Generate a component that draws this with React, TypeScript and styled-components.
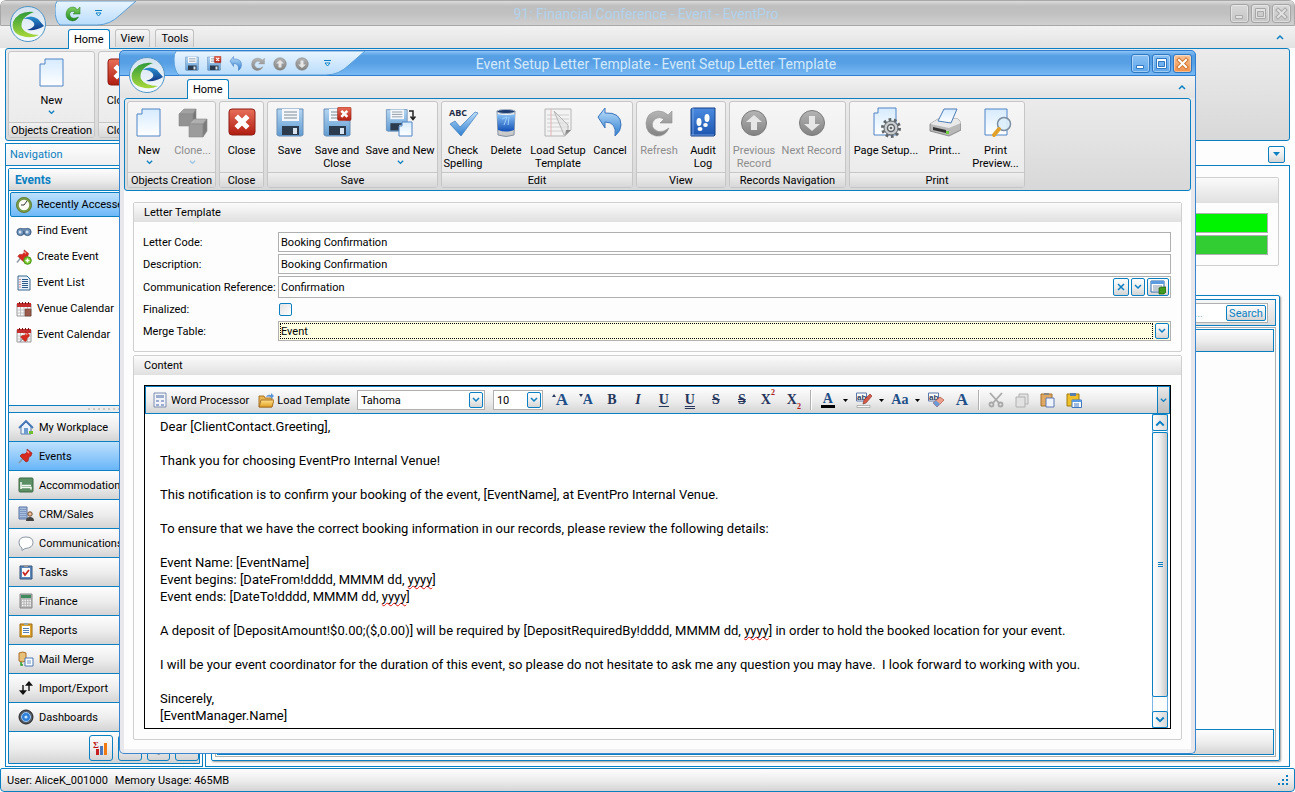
import React from "react";
import styled, { createGlobalStyle, css } from "styled-components";

const BLUE = "#0a7fc2";
const FACE = "linear-gradient(#fdfdfd, #ececec 55%, #d4d4d4)";

const GlobalStyle = createGlobalStyle`
  *, *::before, *::after { box-sizing: border-box; }
  body { margin: 0; background: #fff; color: #000; font: 11px/13px Roboto, "DejaVu Sans Condensed", sans-serif; }
  button, input, select { font: inherit; color: inherit; margin: 0; padding: 0; border: 0; background: none; }
  button { white-space: nowrap; text-align: left; }
  svg { display: block; flex: none; }
`;

/* ---------- icons ---------- */

function Gradient({ id, from, to }: { id: string; from: string; to: string }) {
  return (
    <linearGradient id={id} x1="0" y1="0" x2="0" y2="1">
      <stop offset="0" stopColor={from} />
      <stop offset="1" stopColor={to} />
    </linearGradient>
  );
}

const DefsSvg = styled.svg`
  position: absolute;
  width: 0;
  height: 0;
`;

function Defs() {
  return (
    <DefsSvg aria-hidden>
      <defs>
        <Gradient id="gPage" from="#d6ebff" to="#ffffff" />
        <Gradient id="gRed" from="#e8705a" to="#b01c10" />
        <Gradient id="gDisk" from="#b5d6f2" to="#5f9bd2" />
        <Gradient id="gBlue" from="#bfe0fb" to="#2f7fd0" />
        <Gradient id="gGray" from="#b5b5b5" to="#828282" />
        <Gradient id="gBook" from="#4a8be0" to="#1d55ae" />
        <Gradient id="gBin" from="#8cc4f5" to="#1050b8" />
        <Gradient id="gSilver" from="#fafafa" to="#c4c4c4" />
        <Gradient id="gGreen" from="#7fd060" to="#1f8a1f" />
        <Gradient id="gGold" from="#ffe08a" to="#e0a020" />
        <Gradient id="gOrb" from="#d4e2ee" to="#f6fbff" />
        <Gradient id="gLeaf" from="#2f9a3a" to="#a8d83a" />
        <Gradient id="gSwirl" from="#2a90d0" to="#123a88" />
        <Gradient id="gQat" from="#e9f5ff" to="#b9dcfb" />
      </defs>
    </DefsSvg>
  );
}

const disk = (
  <g>
    <path d="M3 2h26v26l-2 1H5l-2-1z" fill="url(#gDisk)" stroke="#6a8fb5" />
    <path d="M8 2h17v12H8z" fill="#f4f8fc" />
    <path d="M10 5h13M10 8h13M10 11h13" stroke="#7c8894" />
    <path d="M8 19h17v9H8z" fill="#2b3a4c" />
    <path d="M19 21h4v6h-4z" fill="#d7e3ee" />
  </g>
);

const redX = (
  <g>
    <rect x="3" y="2" width="26" height="26" rx="3" fill="url(#gRed)" stroke="#8e1c12" />
    <path d="M12 11l8 8M20 11L12 19" stroke="#fff" strokeWidth="5" strokeLinecap="square" />
  </g>
);

const pageShape = (
  <path d="M9 2h18v27H4V7h5z" fill="url(#gPage)" stroke="#4f84c4" />
);

const pin = (
  <g>
    <path d="M1 15l5-6" stroke="#8a94a0" strokeWidth="1.5" />
    <path d="M9 1l5 4-1 3-2 1-1 4-2 1-6-6 2-2 3 0 2-2z" fill="#d8291f" stroke="#98180f" strokeWidth=".6" />
    <path d="M9 3l2 2" stroke="#ff9a90" strokeWidth="1.5" />
  </g>
);

const calendar = (
  <g>
    <path d="M1 3h14v12H1z" fill="#f6f6f6" stroke="#9a9a9a" />
    <path d="M1 2h14v4H1z" fill="#c32d2d" />
    <path d="M3.500 1v2M6.500 1v2M9.500 1v2M12.500 1v2" stroke="#701818" />
    <path d="M1 9h14M1 12h14M4.500 6v9M8 6v9M11.500 6v9" stroke="#b5b5b5" strokeWidth=".7" />
  </g>
);

const big: Record<string, React.ReactNode> = {
  new: pageShape,
  close: redX,
  clone: (
    <g stroke="#8c8c8c" strokeWidth=".6">
      <path d="M2 7l5-5h12l-3 5z" fill="#a2a2a2" />
      <path d="M2 7h14v12H2z" fill="#929292" />
      <path d="M16 7l3-5v12l-3 5z" fill="#757575" />
      <path d="M12 17l5-5h13l-4 5z" fill="#b0b0b0" />
      <path d="M12 17h14v13H12z" fill="#9c9c9c" />
      <path d="M26 17l4-5v12l-4 6z" fill="#7c7c7c" />
    </g>
  ),
  save: disk,
  saveClose: (
    <g>
      {disk}
      <g transform="translate(15 -1) scale(.52)">{redX}</g>
    </g>
  ),
  saveNew: (
    <g>
      <g transform="translate(0 1) scale(.8)">{disk}</g>
      <path d="M18 15h10v14H15V19h3z" fill="url(#gPage)" stroke="#4f84c4" />
      <path d="M25 4h4v8M26.500 9.500l2.500 3 2.500-3" fill="none" stroke="#222" strokeWidth="1.500" />
    </g>
  ),
  spelling: (
    <g>
      <text x="2" y="9" fontSize="9" fontWeight="bold" fill="#1d2b45" fontFamily="Open Sans, sans-serif">ABC</text>
      <path d="M3 17l5-3 5 6L28 5l3 1-17 23z" fill="url(#gBlue)" stroke="#3c78b8" strokeWidth=".7" />
    </g>
  ),
  delete: (
    <g>
      <path d="M7 4h18l-1 24q-8 3-16 0z" fill="url(#gSilver)" stroke="#8894a4" />
      <path d="M7 7q9 2 18 0l-1 16q-8 3-16 0z" fill="url(#gBin)" />
      <ellipse cx="16" cy="4.500" rx="9" ry="2" fill="#1d3c70" stroke="#a5b4c6" />
      <path d="M12 12l5-2-3 8M19 10l-1 8" stroke="#9cd0ff" fill="none" />
    </g>
  ),
  loadTemplate: (
    <g>
      <path d="M3 2h26v21l-6 6H3z" fill="#f3f3f3" stroke="#b5b5b5" />
      <path d="M5 8h22M5 12h22M5 16h22M5 20h22M5 24h18" stroke="#cfcfcf" />
      <path d="M9 2v27" stroke="#e0b5b5" />
      <path d="M12 4l14 14v5l-4 5z" fill="#e2e2e2" fillOpacity=".7" stroke="#b5b5b5" />
      <path d="M29 23h-5q0 4-2 6z" fill="#8a8a8a" />
    </g>
  ),
  cancel: (
    <path d="M3 11L10 2v5q16-1 16 12 0 6-6 11 2-14-10-14v6z" transform="translate(1 -1)" fill="url(#gBlue)" stroke="#3a74bd" />
  ),
  refresh: (
    <path d="M25 8l4-4v12H17l4-4q-5-3-9 0-5 5-1 10 4 4 10 2l5-3q-4 9-13 8Q3 27 3 16 4 5 15 4q6 0 10 4z" fill="url(#gGray)" stroke="#8f8f8f" strokeWidth=".6" />
  ),
  audit: (
    <g>
      <path d="M4 2l2-1h22v27l-1 1H4z" fill="url(#gBook)" stroke="#153f86" />
      <path d="M4 28h23M6 1v27" stroke="#8fb8ee" strokeWidth=".7" />
      <g fill="#fff">
        <ellipse cx="12" cy="15" rx="2.500" ry="4" />
        <ellipse cx="13" cy="22" rx="2.500" ry="2" />
        <ellipse cx="20" cy="11" rx="2.500" ry="4" />
        <ellipse cx="18.500" cy="18" rx="2.300" ry="2" />
      </g>
    </g>
  ),
  up: (
    <g>
      <circle cx="16" cy="16" r="12.500" fill="url(#gGray)" stroke="#7a7a7a" />
      <path d="M16 8l8 7h-5v8h-6v-8H8z" fill="#e6e6e6" />
    </g>
  ),
  down: (
    <g>
      <circle cx="16" cy="16" r="12.500" fill="url(#gGray)" stroke="#7a7a7a" />
      <path d="M16 24l-8-7h5V9h6v8h5z" fill="#e6e6e6" />
    </g>
  ),
  pageSetup: (
    <g>
      <path d="M8 1h18v27H4V6h4z" fill="url(#gPage)" stroke="#4f84c4" />
      <circle cx="21" cy="21" r="8.500" fill="none" stroke="#5f6468" strokeWidth="3" strokeDasharray="2.700 2.640" />
      <circle cx="21" cy="21" r="7" fill="#c9cdd0" stroke="#5f6468" />
      <circle cx="21" cy="21" r="3.500" fill="#eee" stroke="#5f6468" strokeWidth="1.500" />
      <circle cx="21" cy="21" r="1.300" fill="#5f6468" />
    </g>
  ),
  print: (
    <g>
      <path d="M1 17l8-5h20l3 4v7l-12 6L1 24z" fill="#b8b8b8" stroke="#6e6e6e" strokeWidth=".7" />
      <path d="M1 17l8-5h20l3 4-12 5z" fill="#e9e9e9" />
      <path d="M9 14L15 2h13l-6 14z" fill="url(#gPage)" stroke="#4c7db8" />
      <path d="M4 20l13 3v3L4 23z" fill="#333" />
      <path d="M17 24h3v3h-3z" fill="#6ccf3c" />
    </g>
  ),
  preview: (
    <g>
      <path d="M5 2h22v26H5z" fill="url(#gPage)" stroke="#4f84c4" />
      <circle cx="24" cy="17" r="6.500" fill="#dceefa" fillOpacity=".9" stroke="#7b8da0" strokeWidth="1.500" />
      <path d="M19 22l-5 6" stroke="#e0a02a" strokeWidth="4" strokeLinecap="round" />
    </g>
  ),
};

const small: Record<string, React.ReactNode> = {
  pin,
  recent: (
    <g>
      <circle cx="8" cy="8" r="6.500" fill="#fdfdf6" stroke="#7a9a4a" strokeWidth="2.500" />
      <circle cx="8" cy="8" r="7.600" fill="none" stroke="#4c6a1c" strokeWidth=".6" />
      <path d="M8 8l3-4M8 8H5" stroke="#333" fill="none" />
    </g>
  ),
  find: (
    <g>
      <circle cx="4.500" cy="9" r="3.600" fill="#6f93b8" stroke="#3d5a80" />
      <circle cx="11.500" cy="9" r="3.600" fill="#6f93b8" stroke="#3d5a80" />
      <path d="M6 5h4v3H6z" fill="#6a86a8" />
      <circle cx="4" cy="9" r="1.500" fill="#cfe0f0" />
      <circle cx="11" cy="9" r="1.500" fill="#cfe0f0" />
    </g>
  ),
  create: (
    <g>
      <g transform="scale(.9)">{pin}</g>
      <circle cx="11.500" cy="11.500" r="3.800" fill="#74c52c" stroke="#4c951a" />
      <path d="M11.500 9.500v4M9.500 11.500h4" stroke="#fff" strokeWidth="1.500" />
    </g>
  ),
  list: (
    <g>
      <path d="M2 1h9l3 3v11H2z" fill="#e8f2fb" stroke="#39698f" />
      <path d="M6 4.500h6M6 6.500h6M6 8.500h6M6 10.500h6M6 12.500h6" stroke="#2c5a88" />
      <path d="M3.500 4.500h1M3.500 7h1M3.500 9.500h1M3.500 12h1" stroke="#c22" />
    </g>
  ),
  venueCal: (
    <g>
      {calendar}
      <path d="M9 8h6v7H9z" fill="#9a5a4a" stroke="#6a3a30" strokeWidth=".6" />
    </g>
  ),
  eventCal: (
    <g>
      {calendar}
      <g transform="translate(3 4) scale(.75)">{pin}</g>
    </g>
  ),
  home: (
    <g>
      <path d="M3 8v7h10V8L8 3z" fill="#eaf2fb" stroke="#5a7ca8" />
      <path d="M1 9l7-7 7 7" fill="none" stroke="#4678b8" strokeWidth="1.800" />
      <path d="M6 9h4v6H6z" fill="#6f9cd0" />
      <path d="M11 12h4v3h-4z" fill="#6ec02e" />
    </g>
  ),
  bed: (
    <g>
      <rect x="1" y="1" width="14" height="14" rx="1" fill="#5c8f64" stroke="#3d6b45" />
      <path d="M3 5v7M3 10.500h10v2M4 8.500h9" stroke="#f2faf2" strokeWidth="1.500" fill="none" />
    </g>
  ),
  crm: (
    <g>
      <path d="M1 1h8v12H1z" fill="#a9bfe0" stroke="#52719f" />
      <path d="M3 3v9M5 3v9M7 3v9" stroke="#52719f" strokeDasharray="1 1" />
      <circle cx="12" cy="8" r="2.200" fill="#f0c098" stroke="#6a4a30" />
      <path d="M8 15q0-4 4-4t4 4z" fill="#444" />
    </g>
  ),
  speech: (
    <path d="M4 13l0 2.500 3-2Q15 13 15 7.500 15 2 8 2 1 2 1 7.500q0 4 3 5.500z" fill="#fff" stroke="#8b97a5" />
  ),
  tasks: (
    <g>
      <path d="M2 2h12v13H2z" fill="#5c87ba" stroke="#33557f" />
      <path d="M4 4h8v9H4z" fill="#fff" />
      <path d="M6 1h4v2H6z" fill="#999" />
      <path d="M5 8l2 3 4-5" fill="none" stroke="#c82222" strokeWidth="1.700" />
    </g>
  ),
  calc: (
    <g>
      <path d="M2 1h12v14H2z" fill="#b5b5b5" stroke="#888" />
      <path d="M3 2h10v3H3z" fill="#3f8a5c" />
      <path d="M4 7.500h9M4 10h9M4 12.500h9" stroke="#f5f5f5" strokeWidth="1.500" strokeDasharray="1.500 1" />
    </g>
  ),
  reports: (
    <g>
      <path d="M2 2h12v13H2z" fill="#e0a52e" stroke="#9a6a10" />
      <path d="M4 4h8v9H4z" fill="#fff" />
      <path d="M6 1h4v2H6z" fill="#9aa" />
      <path d="M5 6.500h6M5 8.500h6M5 10.500h6" stroke="#5580b5" />
    </g>
  ),
  merge: (
    <g>
      <path d="M1 2q4-2 7 0v8q-4 2-7 0z" fill="#e9c078" stroke="#a8702a" />
      <path d="M7 7h8v8H7z" fill="#fff" stroke="#4877b5" />
      <path d="M9 10h4M9 12h4" stroke="#6f93c5" />
      <path d="M3 11v3h2" stroke="#2d9a2d" fill="none" strokeWidth="1.500" />
    </g>
  ),
  transfer: (
    <path d="M5 5v8M2.500 11L5 14l2.500-3zM11 3v8M8.500 5L11 2l2.500 3z" fill="#111" stroke="#111" strokeWidth="1.400" />
  ),
  gauge: (
    <g>
      <circle cx="8" cy="8" r="7" fill="#555c66" stroke="#222" />
      <circle cx="8" cy="8" r="4.500" fill="#2f7fd8" stroke="#9cc8f2" />
      <circle cx="8" cy="8" r="1.600" fill="#bfe2ff" />
    </g>
  ),
  chart: (
    <g>
      <text x="0" y="8" fontSize="9" fontWeight="bold" fill="#c01818" fontFamily="Liberation Serif, serif">Σ</text>
      <path d="M3 9h3v6H3z" fill="#c82020" />
      <path d="M7 6h3v9H7z" fill="#4b78b8" />
      <path d="M11 3h3v12h-3z" fill="#f07a10" />
    </g>
  ),
  box: <path d="M2 3h12v10H2z" fill="#e07a3a" stroke="#9a4a1a" />,
  gear: <circle cx="8" cy="8" r="5" fill="none" stroke="#556" strokeWidth="3" strokeDasharray="2 1" />,
  greenRefresh: (
    <path d="M12 4l3-3v7H8l2-2Q6 4 4.500 8q1 5 6 4l3-1q-2 4-6 4Q1 14 1 8 2 1 8 1q3 0 4 3z" fill="url(#gGreen)" stroke="#2a7a22" strokeWidth=".5" />
  ),
  word: (
    <g>
      <path d="M2 1h12v14H2z" fill="#f0f3fa" stroke="#7d8cb0" />
      <path d="M4 3h8v3H4zM4 8h3v2H4zM9 8h3v2H9zM4 12h3v2H4zM9 12h3v2H9z" fill="#9dadd0" />
    </g>
  ),
  folder: (
    <g>
      <path d="M1 4h5l1 2h7v9H1z" fill="#e8b552" stroke="#a8742a" />
      <path d="M3 8h13l-2 7H1z" fill="url(#gGold)" stroke="#a8742a" />
      <path d="M8 5q1-3 5-2V1l3 3-3 3V5q-3-1-5 0z" fill="#5d96d8" />
    </g>
  ),
  lookup: (
    <g>
      <path d="M1 2h13v11H1z" fill="#fff" stroke="#2c66a8" />
      <path d="M1 2h13v3H1z" fill="#5a9ae0" />
      <path d="M3 7h9M3 9h9M3 11h9" stroke="#8393a5" />
      <path d="M9 9l2-1h5v5l-2 2H9z" fill="#3f9a1f" stroke="#1f5a10" strokeWidth=".7" />
    </g>
  ),
  highlighter: (
    <g>
      <path d="M.5 1h10v8H.5z" fill="#fff" stroke="#5c78a8" />
      <text x="1" y="8" fontSize="8" fontWeight="bold" fill="#2a3c60" fontFamily="Liberation Sans, sans-serif">ab</text>
      <path d="M7 12l1-4 6-6 2 2-6 7z" fill="#d85a4a" stroke="#7a3028" strokeWidth=".6" />
      <path d="M1 13.500h13v2H1z" fill="#fff" stroke="#999" strokeWidth=".7" />
    </g>
  ),
  eraser: (
    <g>
      <path d="M.5 1h10v8H.5z" fill="#fff" stroke="#5c78a8" />
      <text x="1" y="8" fontSize="8" fontWeight="bold" fill="#2a3c60" fontFamily="Liberation Sans, sans-serif">ab</text>
      <path d="M5 11l7-6 4 3-7 7z" fill="#f0a08a" stroke="#a85040" strokeWidth=".7" />
      <path d="M5 11l3-2.500 4 3.500-3 3z" fill="#6a9ad8" />
    </g>
  ),
  cut: (
    <g stroke="#a8a8a8" fill="none" strokeWidth="1.800">
      <path d="M2 1l9 10M14 1L5 11" />
      <circle cx="3.500" cy="12.500" r="2" />
      <circle cx="12.500" cy="12.500" r="2" />
    </g>
  ),
  copy: (
    <g fill="#e2e2e2" stroke="#b0b0b0">
      <path d="M5 2h9v10H5z" />
      <path d="M2 5h9v10H2z" />
    </g>
  ),
  paste: (
    <g>
      <path d="M1 2h11v12H1z" fill="#e0a860" stroke="#a07030" />
      <path d="M4 1h5v2H4z" fill="#888" />
      <path d="M6 6h8v9H6z" fill="#eef3fc" stroke="#5c78b5" />
    </g>
  ),
  pasteSpecial: (
    <g>
      <path d="M1 2h12v12H1z" fill="#f0c02a" stroke="#a07a10" />
      <path d="M4 1h6v3H4z" fill="#5a7fae" />
      <path d="M6 8h9.500v7.500H6z" fill="#fff" stroke="#3f78c0" />
      <path d="M6 8h9.500v2H6z" fill="#5a9ae0" />
      <path d="M8 12h5M8 14h5" stroke="#3f78c0" />
    </g>
  ),
};

function Icon({ name, size = 16 }: { name: string; size?: number }) {
  const drawing = big[name] ?? small[name];
  const box = big[name] ? 32 : 16;
  return (
    <svg width={size} height={size} viewBox={`0 0 ${box} ${box}`} aria-hidden>
      {drawing}
    </svg>
  );
}

function Chevron({ up = false, color = BLUE, size = 7 }: { up?: boolean; color?: string; size?: number }) {
  return (
    <svg width={size} height={size} viewBox="0 0 8 8" aria-hidden>
      <path d={up ? "M1 6l3-3 3 3" : "M1 2l3 3 3-3"} fill="none" stroke={color} strokeWidth="1.500" />
    </svg>
  );
}

function OrbLogo() {
  return (
    <svg width="38" height="38" viewBox="0 0 38 38" aria-hidden>
      <circle cx="19" cy="19" r="17.500" fill="url(#gOrb)" stroke="#4f93c4" />
      <path d="M25 7Q10 5 4 17 2 28 13 31q9 3 17-1-13 0-17-7Q10 13 25 7z" fill="url(#gLeaf)" />
      <path d="M14 14q8-5 15 0l6 7q-7 5-17 4 9-3 7-7-4-5-11-4z" fill="url(#gSwirl)" />
    </svg>
  );
}

/* ---------- window chrome ---------- */

const AppWindow = styled.div`
  position: relative;
  display: flex;
  flex-direction: column;
  height: 100vh;
  min-height: 640px;
  overflow: hidden;
  background: #fdfdfd;
  border-radius: 6px 6px 4px 4px;
`;

const TitleBar = styled.header<{ $active?: boolean }>`
  position: relative;
  display: grid;
  grid-template-columns: 1fr auto 1fr;
  align-items: center;
  flex: none;
  height: 26px;
  padding-right: 3px;
  border-radius: 5px 5px 0 0;
  ${({ $active }) =>
    $active
      ? css`
          color: #d3e9fc;
          border: 1px solid #2f7ed0;
          background: linear-gradient(#8cc4f6, #569fe4 20%, #579fe4 50%, #78b9f4);
        `
      : css`
          color: #b3d3ec;
          border: 1px solid #a8a8a8;
          background: linear-gradient(#dcdcdc, #bfbfbf 20%, #c0c0c0 50%, #d0d0d0);
        `}
`;

const WindowTitle = styled.h1`
  margin: 0;
  font-size: 14px;
  line-height: 18px;
  font-weight: normal;
`;

const WindowButtons = styled.div`
  display: flex;
  justify-content: flex-end;
  gap: 2px;
`;

const WindowButton = styled.button<{ $tone: "gray" | "blue" | "orange" }>`
  display: grid;
  place-items: center;
  width: 19px;
  height: 19px;
  border-radius: 3px;
  border: 1px solid ${({ $tone }) => ($tone === "gray" ? "#a5a5a5" : "#2f78c4")};
  box-shadow: inset 0 0 0 1px rgba(255, 255, 255, 0.4);
  background: ${({ $tone }) =>
    $tone === "gray"
      ? "linear-gradient(#d8d8d8, #c6c6c6)"
      : $tone === "blue"
        ? "linear-gradient(#8cc2f4, #5ea6ea)"
        : "linear-gradient(#f7c49a, #f29048)"};
`;

const QuickAccess = styled.div<{ $narrow?: boolean }>`
  position: relative;
  display: flex;
  align-items: center;
  gap: 6px;
  height: 25px;
  padding-left: 10px;
  margin-left: 54px;
  width: ${({ $narrow }) => ($narrow ? "82px" : "192px")};
`;

const QuickShape = styled.svg`
  position: absolute;
  inset: 0;
`;

const QuickButton = styled.button`
  position: relative;
  width: 16px;
  height: 16px;
`;

const MoreButton = styled(QuickButton)`
  display: grid;
  place-items: center;
  margin-left: 3px;
`;

const OrbButton = styled.button`
  position: absolute;
  left: 9px;
  top: 5px;
  width: 38px;
  height: 38px;
  border-radius: 19px;
  z-index: 1;
`;

const TabRow = styled.nav`
  display: flex;
  align-items: flex-end;
  gap: 5px;
  flex: none;
  height: 22px;
  padding: 0 10px 0 68px;
  background: linear-gradient(#f2f2f2, #e2e2e2);
`;

const RibbonTab = styled.button<{ $active?: boolean }>`
  position: relative;
  padding: 0 5px;
  margin-bottom: ${({ $active }) => ($active ? "-1px" : "1px")};
  height: ${({ $active }) => ($active ? "20px" : "18px")};
  border: 1px solid ${({ $active }) => ($active ? BLUE : "#c2c2c2")};
  border-bottom: 0;
  border-radius: 3px 3px 0 0;
  background: ${({ $active }) => ($active ? "#fff" : "linear-gradient(#f6f6f6, #dcdcdc)")};
`;

const CollapseButton = styled.button`
  display: grid;
  place-items: center;
  width: 10px;
  height: 22px;
  margin-left: auto;
`;

const Ribbon = styled.div`
  display: flex;
  gap: 3px;
  flex: none;
  height: 93px;
  margin: 0 5px;
  padding: 2px;
  border: 1px solid ${BLUE};
  border-radius: 3px;
  background: linear-gradient(#ebebeb, #d8d8d8);
`;

const RibbonGroupBox = styled.section`
  display: flex;
  flex-direction: column;
  height: 87px;
  border: 1px solid #c6c6c6;
  border-radius: 3px;
  background: linear-gradient(#f6f6f6, #e9e9e9);
`;

const RibbonItems = styled.div`
  display: flex;
  flex: 1;
  justify-content: center;
`;

const RibbonCaption = styled.h2`
  margin: 0;
  height: 15px;
  font-size: 11px;
  line-height: 15px;
  font-weight: normal;
  text-align: center;
  border-top: 1px solid #c6c6c6;
  background: linear-gradient(#f0f0f0, #d8d8d8);
`;

const RibbonButtonBox = styled.button<{ $width: number }>`
  display: flex;
  flex-direction: column;
  align-items: center;
  width: ${({ $width }) => $width}px;
  padding-top: 5px;
  line-height: 13px;
  text-align: center;
  white-space: pre;
  &:disabled { color: #8d8d8d; }
  svg + span { margin-top: 5px; }
  span + svg { margin-top: 2px; }
`;

type Command = { label: string; icon: string; width: number; disabled?: boolean; menu?: boolean };
type Group = { caption: string; commands: Command[] };

function RibbonGroup({ caption, commands }: Group) {
  return (
    <RibbonGroupBox>
      <RibbonItems>
        {commands.map((c) => (
          <RibbonButtonBox key={c.label} $width={c.width} disabled={c.disabled}>
            <Icon name={c.icon} size={32} />
            <span>{c.label}</span>
            {c.menu && <Chevron color={c.disabled ? "#9cc4e4" : BLUE} />}
          </RibbonButtonBox>
        ))}
      </RibbonItems>
      <RibbonCaption>{caption}</RibbonCaption>
    </RibbonGroupBox>
  );
}

function WindowControls({ gray }: { gray?: boolean }) {
  const line = gray ? "#e2e2e2" : "#ffffff";
  const edge = gray ? "#a8a8a8" : "#2f78c4";
  return (
    <WindowButtons>
      <WindowButton $tone={gray ? "gray" : "blue"} aria-label="Minimize">
        <svg width="13" height="13"><path d="M2.500 8.500h7v3h-7z" fill={line} stroke={edge} /></svg>
      </WindowButton>
      <WindowButton $tone={gray ? "gray" : "blue"} aria-label="Maximize">
        <svg width="13" height="13">
          <path d="M1.500 1.500h10v10h-10z" fill={line} stroke={edge} />
          <path d="M3.500 4.500h6v5h-6z" fill={gray ? "#ccc" : "#6fb0ee"} stroke={edge} />
        </svg>
      </WindowButton>
      <WindowButton $tone={gray ? "gray" : "orange"} aria-label="Close window">
        <svg width="13" height="13">
          <path d="M3 3l7 7M10 3l-7 7" stroke={gray ? "#a8a8a8" : "#d0752e"} strokeWidth="4" strokeLinecap="square" />
          <path d="M3 3l7 7M10 3l-7 7" stroke={line} strokeWidth="2" strokeLinecap="square" />
        </svg>
      </WindowButton>
    </WindowButtons>
  );
}

function QuickBar({ icons, narrow }: { icons: string[]; narrow?: boolean }) {
  const w = narrow ? 82 : 192;
  return (
    <QuickAccess $narrow={narrow}>
      <QuickShape width={w} height="25">
        <path
          d={`M2 0H${w - 1}L${w - 17} 14Q${w - 27} 24 ${w - 40} 24H5Q0 20 0 8Q0 3 2 0z`}
          fill="url(#gQat)"
          stroke="#5a9fd8"
        />
      </QuickShape>
      {icons.map((name) => (
        <QuickButton key={name} aria-label={name}>
          <Icon name={name} />
        </QuickButton>
      ))}
      <MoreButton aria-label="Customize quick access">
        <svg width="7" height="7"><path d="M0 .5h7M1 3h5L3.500 6z" fill="#fff" stroke={BLUE} /></svg>
      </MoreButton>
    </QuickAccess>
  );
}

/* ---------- navigation ---------- */

const Workspace = styled.main`
  display: flex;
  flex: 1;
  min-height: 0;
  gap: 2px;
  margin: 2px 5px 1px;
`;

const NavPanel = styled.aside`
  display: flex;
  flex-direction: column;
  width: 198px;
  border: 1px solid ${BLUE};
`;

const NavTitle = styled.h2`
  margin: 0;
  padding: 0 4px;
  font-size: 11px;
  line-height: 22px;
  height: 22px;
  font-weight: normal;
  color: ${BLUE};
  background: linear-gradient(#fdfdfd, #efefef);
  border-bottom: 1px solid ${BLUE};
`;

const NavBox = styled.div`
  display: flex;
  flex: 1;
  flex-direction: column;
  min-height: 0;
  margin: 2px;
  border: 1px solid ${BLUE};
  border-radius: 2px 2px 0 0;
`;

const NavHeading = styled.h3`
  margin: 0;
  padding: 0 6px;
  font-size: 12px;
  line-height: 22px;
  height: 22px;
  color: ${BLUE};
  background: ${FACE};
  border-bottom: 1px solid ${BLUE};
`;

const NavList = styled.ul`
  flex: 1;
  min-height: 0;
  overflow: hidden;
  list-style: none;
  margin: 0;
  padding: 1px;
`;

const NavItem = styled.button<{ $selected?: boolean }>`
  display: flex;
  align-items: center;
  gap: 5px;
  width: 100%;
  height: 25px;
  margin-bottom: 1px;
  padding: 0 5px;
  border: 1px solid transparent;
  ${({ $selected }) =>
    $selected &&
    css`
      border-color: ${BLUE};
      border-radius: 2px;
      background: linear-gradient(#bfe1fd, #6db8f8);
    `}
`;

const Splitter = styled.div`
  flex: none;
  height: 8px;
  border-top: 1px solid ${BLUE};
  border-bottom: 1px solid ${BLUE};
  background: radial-gradient(circle, #a5a5a5 1px, transparent 1px) center / 5px 6px repeat-x content-box, #ececec;
  padding: 0 78px;
`;

const NavGroupButton = styled.button<{ $selected?: boolean }>`
  display: flex;
  align-items: center;
  gap: 5px;
  flex: none;
  height: 29px;
  padding: 0 9px;
  border-bottom: 1px solid ${BLUE};
  background: ${({ $selected }) => ($selected ? "linear-gradient(#bfe1fd, #68b5f8)" : FACE)};
`;

const NavFooter = styled.div`
  display: flex;
  align-items: center;
  gap: 5px;
  flex: none;
  height: 31px;
  padding-left: 80px;
  background: ${FACE};
`;

const FooterButton = styled.button`
  display: grid;
  place-items: center;
  width: 24px;
  height: 26px;
  border: 1px solid ${BLUE};
  border-radius: 3px;
  background: ${FACE};
`;

/* ---------- documents area behind the dialog ---------- */

const DocumentArea = styled.section`
  display: flex;
  flex: 1;
  flex-direction: column;
  min-width: 0;
`;

const DocumentTabs = styled.div`
  display: flex;
  justify-content: flex-end;
  align-items: center;
  flex: none;
  height: 23px;
  padding-right: 5px;
  border-bottom: 1px solid ${BLUE};
`;

const MiniButton = styled.button<{ $width?: number; $height?: number }>`
  display: grid;
  place-items: center;
  flex: none;
  width: ${({ $width = 14 }) => $width}px;
  height: ${({ $height = 16 }) => $height}px;
  border: 1px solid ${BLUE};
  border-radius: 2px;
  color: ${BLUE};
  background: ${FACE};
`;

const DocumentBody = styled.div`
  display: flex;
  flex: 1;
  flex-direction: column;
  min-height: 0;
  padding: 11px 9px 5px 5px;
  border: 1px solid ${BLUE};
  border-top: 0;
`;

const StatusGroup = styled.div`
  flex: none;
  height: 89px;
  margin: 0 1px 29px 5px;
  border: 1px solid #cfcfcf;
  border-radius: 2px;
`;

const StatusHeader = styled.div`
  height: 25px;
  margin-bottom: 10px;
  background: linear-gradient(#fafafa, #e0e0e0);
`;

const StatusStrip = styled.div<{ $color: string }>`
  height: 20px;
  margin: 0 10px 2px;
  border: 1px solid #b0b0b0;
  background: ${({ $color }) => $color};
`;

const GridFrame = styled.div`
  display: flex;
  flex: 1;
  flex-direction: column;
  min-height: 0;
  padding: 3px;
  border: 1px solid ${BLUE};
  border-radius: 2px;
  box-shadow: 1px 1px 2px #999;
`;

const SearchBar = styled.div`
  display: flex;
  flex: none;
  justify-content: flex-end;
  height: 27px;
  padding: 3px 7px;
  border: 1px solid ${BLUE};
  background: linear-gradient(#f6f6f6, #dcdcdc);
`;

const SearchBox = styled.div`
  display: flex;
  align-items: center;
  width: 240px;
  height: 20px;
  padding-right: 1px;
  border: 1px solid #b0b0b0;
  background: #fff;
`;

const SearchInput = styled.input`
  flex: 1;
  min-width: 0;
  text-align: right;
  padding-right: 23px;
  &::placeholder { color: #8cb4d0; opacity: 1; }
`;

const GridTable = styled.div`
  display: flex;
  flex: 1;
  flex-direction: column;
  justify-content: space-between;
  min-height: 0;
  margin-top: 1px;
  padding: 1px;
  border: 1px solid #b0b0b0;
`;

const GridBand = styled.div<{ $height: number }>`
  height: ${({ $height }) => $height}px;
  border: 1px solid ${BLUE};
  background: ${FACE};
`;

const StatusBar = styled.footer`
  display: flex;
  align-items: center;
  justify-content: space-between;
  gap: 7px;
  flex: none;
  height: 24px;
  padding: 0 6px;
  border: 1px solid ${BLUE};
  border-radius: 2px 2px 4px 4px;
  background: ${FACE};
`;

const StatusText = styled.span`
  display: flex;
  gap: 7px;
`;

/* ---------- dialog ---------- */

const DialogWindow = styled.div`
  position: absolute;
  top: 50px;
  left: 119px;
  right: 99px;
  bottom: 38px;
  display: flex;
  flex-direction: column;
  border: 1px solid #3a86d0;
  border-top: 0;
  border-radius: 6px 6px 5px 5px;
  background: #fdfdfd;
  box-shadow: inset 4px 0 0 #e8e8ec, inset -4px 0 0 #e8e8ec, inset 0 -4px 0 #f0f0f2;
  & > header { margin: 0 -1px; }
  & > ${OrbButton} { left: 8px; top: 6px; }
  & > nav { padding-left: 67px; padding-right: 8px; }
  & > div { margin-left: 4px; margin-right: 4px; }
`;

const DialogBody = styled.div`
  display: flex;
  flex: 1;
  flex-direction: column;
  gap: 3px;
  min-height: 0;
  padding: 11px 9px 13px;
`;

const Panel = styled.section<{ $grow?: boolean }>`
  display: flex;
  flex-direction: column;
  flex: ${({ $grow }) => ($grow ? "1" : "none")};
  min-height: 0;
  border: 1px solid #cfcfcf;
  border-radius: 2px;
`;

const PanelTitle = styled.h2`
  flex: none;
  margin: 0;
  padding: 0 10px;
  font-size: 11px;
  line-height: 20px;
  height: 19px;
  font-weight: normal;
  background: linear-gradient(#fbfbfb, #e0e0e0);
`;

const Form = styled.form`
  display: grid;
  grid-template-columns: 135px 1fr;
  row-gap: 2px;
  align-items: center;
  padding: 10px 10px 10px 9px;
`;

const FieldBox = styled.div<{ $tall?: boolean; $focus?: boolean }>`
  display: flex;
  align-items: center;
  gap: 2px;
  height: ${({ $tall }) => ($tall ? "22px" : "20px")};
  padding: 1px;
  border: 1px solid #b0b0b0;
  background: ${({ $focus }) => ($focus ? "#ffffe1" : "#fff")};
`;

const TextInput = styled.input`
  flex: 1;
  min-width: 0;
  padding: 0 1px;
  outline: 0;
`;

const PickList = styled.select<{ $focus?: boolean }>`
  appearance: none;
  flex: 1;
  min-width: 0;
  height: 16px;
  line-height: 13px;
  outline: 0;
  border: ${({ $focus }) => ($focus ? "1px dotted #000" : "0")};
  padding: ${({ $focus }) => ($focus ? "0" : "0 2px")};
`;

const Tick = styled.input`
  display: block;
  appearance: none;
  width: 13px;
  height: 13px;
  margin: 3px 1px;
  border: 1px solid ${BLUE};
  border-radius: 2px;
  background: linear-gradient(135deg, #e2e2e2, #fff);
`;

const Editor = styled.div`
  display: flex;
  flex-direction: column;
  flex: 1;
  min-height: 0;
  margin: 10px;
  border: 1px solid #000;
  background: #fff;
`;

const FormatBar = styled.div`
  display: flex;
  align-items: center;
  flex: none;
  height: 28px;
  border: 1px solid ${BLUE};
  background: ${FACE};
`;

const TextButton = styled.button`
  display: flex;
  align-items: center;
  gap: 3px;
  padding-left: 6px;
  margin-right: 3px;
`;

const Combo = styled.span<{ $width: number }>`
  display: flex;
  align-items: center;
  width: ${({ $width }) => $width}px;
  height: 20px;
  margin: 0 4px;
  padding: 1px;
  border: 1px solid #b0b0b0;
  background: #fff;
`;

const FormatButtons = styled.div`
  display: flex;
  align-items: center;
`;

const Format = styled.button`
  display: flex;
  align-items: center;
  justify-content: center;
  width: 26px;
  height: 22px;
  color: #26365c;
  font: bold 13px/16px "Liberation Serif", serif;
  sup, sub { font-size: 8px; line-height: 8px; color: #b01818; }
  sup { align-self: flex-start; }
  sub { align-self: flex-end; }
`;

const Letter = styled.span<{ $size?: number; $line?: string; $italic?: boolean; $blue?: boolean; $bar?: boolean }>`
  font-size: ${({ $size = 14 }) => $size}px;
  font-style: ${({ $italic }) => ($italic ? "italic" : "normal")};
  text-decoration: ${({ $line = "none" }) => $line};
  text-underline-offset: 2px;
  color: ${({ $blue }) => ($blue ? "#1f4f88" : "inherit")};
  ${({ $bar }) => $bar && "border-bottom: 3px solid #000; line-height: 13px; padding: 0 2px;"}
`;

const MenuArrow = styled.button`
  display: grid;
  place-items: center;
  width: 10px;
  height: 22px;
`;

const Divider = styled.span`
  width: 2px;
  height: 20px;
  margin: 0 3px;
  border-left: 1px solid #b0b0b0;
  border-right: 1px solid #fff;
`;

const Overflow = styled.button`
  display: grid;
  place-items: center;
  width: 12px;
  align-self: stretch;
  margin-left: auto;
  border-left: 1px solid ${BLUE};
  background: linear-gradient(#e8e8e8, #bdbdbd);
`;

const Document = styled.div`
  display: flex;
  flex: 1;
  min-height: 0;
`;

const LetterBody = styled.div`
  flex: 1;
  overflow: hidden;
  padding: 4px 15px;
  font-size: 13px;
  line-height: 17px;
  outline: 0;
`;

const Line = styled.p`
  margin: 0;
  min-height: 17px;
  white-space: pre-wrap;
`;

const Misspelt = styled.span`
  text-decoration: underline wavy #f01010 1px;
  text-decoration-skip-ink: none;
  text-underline-offset: 1px;
`;

const ScrollTrack = styled.div`
  display: flex;
  flex-direction: column;
  width: 16px;
  margin-right: 2px;
  border-left: 1px solid #7ab6e6;
  border-right: 1px solid #7ab6e6;
`;

const ScrollThumb = styled.div`
  display: grid;
  place-items: center;
  flex: 1;
  margin: 1px -1px 14px;
  border: 1px solid ${BLUE};
  border-radius: 2px;
  background: linear-gradient(90deg, #fdfdfd, #f0f0f0 50%, #c8c8c8);
`;

const ScrollArrow = styled.button`
  display: grid;
  place-items: center;
  height: 17px;
  margin: 0 -1px;
  border: 1px solid ${BLUE};
  border-radius: 2px;
  background: linear-gradient(90deg, #fdfdfd, #d8d8d8);
`;

/* ---------- data ---------- */

const mainGroups: Group[] = [
  { caption: "Objects Creation", commands: [{ label: "New", icon: "new", width: 85, menu: true }] },
  { caption: "Close", commands: [{ label: "Close", icon: "close", width: 43 }] },
];

const dialogGroups: Group[] = [
  {
    caption: "Objects Creation",
    commands: [
      { label: "New", icon: "new", width: 42, menu: true },
      { label: "Clone...", icon: "clone", width: 45, disabled: true, menu: true },
    ],
  },
  { caption: "Close", commands: [{ label: "Close", icon: "close", width: 43 }] },
  {
    caption: "Save",
    commands: [
      { label: "Save", icon: "save", width: 43 },
      { label: "Save and\nClose", icon: "saveClose", width: 52 },
      { label: "Save and New", icon: "saveNew", width: 74, menu: true },
    ],
  },
  {
    caption: "Edit",
    commands: [
      { label: "Check\nSpelling", icon: "spelling", width: 42 },
      { label: "Delete", icon: "delete", width: 44 },
      { label: "Load Setup\nTemplate", icon: "loadTemplate", width: 60 },
      { label: "Cancel", icon: "cancel", width: 44 },
    ],
  },
  {
    caption: "View",
    commands: [
      { label: "Refresh", icon: "refresh", width: 44, disabled: true },
      { label: "Audit\nLog", icon: "audit", width: 44 },
    ],
  },
  {
    caption: "Records Navigation",
    commands: [
      { label: "Previous\nRecord", icon: "up", width: 48, disabled: true },
      { label: "Next Record", icon: "down", width: 67, disabled: true },
    ],
  },
  {
    caption: "Print",
    commands: [
      { label: "Page Setup...", icon: "pageSetup", width: 72 },
      { label: "Print...", icon: "print", width: 45 },
      { label: "Print\nPreview...", icon: "preview", width: 57 },
    ],
  },
];

const navItems = [
  ["Recently Accessed", "recent"],
  ["Find Event", "find"],
  ["Create Event", "create"],
  ["Event List", "list"],
  ["Venue Calendar", "venueCal"],
  ["Event Calendar", "eventCal"],
];

const navGroups = [
  ["My Workplace", "home"],
  ["Events", "pin"],
  ["Accommodations", "bed"],
  ["CRM/Sales", "crm"],
  ["Communications", "speech"],
  ["Tasks", "tasks"],
  ["Finance", "calc"],
  ["Reports", "reports"],
  ["Mail Merge", "merge"],
  ["Import/Export", "transfer"],
  ["Dashboards", "gauge"],
];

const letterLines = [
  "Dear [ClientContact.Greeting],",
  "",
  "Thank you for choosing EventPro Internal Venue!",
  "",
  "This notification is to confirm your booking of the event, [EventName], at EventPro Internal Venue.",
  "",
  "To ensure that we have the correct booking information in our records, please review the following details:",
  "",
  "Event Name: [EventName]",
  "Event begins: [DateFrom!dddd, MMMM dd, yyyy]",
  "Event ends: [DateTo!dddd, MMMM dd, yyyy]",
  "",
  "A deposit of [DepositAmount!$0.00;($,0.00)] will be required by [DepositRequiredBy!dddd, MMMM dd, yyyy] in order to hold the booked location for your event.",
  "",
  "I will be your event coordinator for the duration of this event, so please do not hesitate to ask me any question you may have.  I look forward to working with you.",
  "",
  "Sincerely,",
  "[EventManager.Name]",
];

function Navigation() {
  return (
    <NavPanel>
      <NavTitle>Navigation</NavTitle>
      <NavBox>
        <NavHeading>Events</NavHeading>
        <NavList>
          {navItems.map(([label, icon], i) => (
            <li key={label}>
              <NavItem $selected={i === 0}>
                <Icon name={icon} />
                {label}
              </NavItem>
            </li>
          ))}
        </NavList>
        <Splitter />
        {navGroups.map(([label, icon]) => (
          <NavGroupButton key={label} $selected={label === "Events"}>
            <Icon name={icon} />
            {label}
          </NavGroupButton>
        ))}
        <NavFooter>
          <FooterButton aria-label="Statistics"><Icon name="chart" /></FooterButton>
          <FooterButton aria-label="Packages"><Icon name="box" /></FooterButton>
          <FooterButton aria-label="Setup"><Icon name="gear" /></FooterButton>
          <FooterButton aria-label="More" />
        </NavFooter>
      </NavBox>
    </NavPanel>
  );
}

function Documents() {
  return (
    <DocumentArea>
      <DocumentTabs>
        <MiniButton $width={17} $height={17} aria-label="Open documents">
          <svg width="7" height="4"><path d="M0 0h7L3.500 4z" fill={BLUE} /></svg>
        </MiniButton>
      </DocumentTabs>
      <DocumentBody>
        <StatusGroup>
          <StatusHeader />
          <StatusStrip $color="#00f400" />
          <StatusStrip $color="#32cd32" />
        </StatusGroup>
        <GridFrame>
          <SearchBar>
            <SearchBox>
              <SearchInput placeholder="Enter text to search..." aria-label="Search text" />
              <MiniButton $width={40}>Search</MiniButton>
            </SearchBox>
          </SearchBar>
          <GridTable>
            <GridBand $height={23} />
            <GridBand $height={26} />
          </GridTable>
        </GridFrame>
      </DocumentBody>
    </DocumentArea>
  );
}

function BlackArrow() {
  return <svg width="5" height="3" aria-hidden><path d="M0 0h5L2.500 3z" fill="#000" /></svg>;
}

function FormatToolbar() {
  return (
    <FormatBar>
      <TextButton><Icon name="word" />Word Processor</TextButton>
      <TextButton><Icon name="folder" />Load Template</TextButton>
      <Combo $width={128}>
        <PickList aria-label="Font"><option>Tahoma</option></PickList>
        <MiniButton aria-label="Font list" tabIndex={-1}><Chevron size={8} /></MiniButton>
      </Combo>
      <Combo $width={50}>
        <PickList aria-label="Font size"><option>10</option></PickList>
        <MiniButton aria-label="Size list" tabIndex={-1}><Chevron size={8} /></MiniButton>
      </Combo>
      <FormatButtons>
        <Format aria-label="Grow font">
          <svg width="4" height="12"><path d="M0 3h4L2 0z" fill="#26365c" /></svg>
          <Letter $size={17} $blue>A</Letter>
        </Format>
        <Format aria-label="Shrink font">
          <svg width="4" height="12"><path d="M0 0h4L2 3z" fill="#26365c" /></svg>
          <Letter $blue>A</Letter>
        </Format>
        <Format><Letter>B</Letter></Format>
        <Format><Letter $italic>I</Letter></Format>
        <Format><Letter $line="underline">U</Letter></Format>
        <Format><Letter $line="underline double">U</Letter></Format>
        <Format><Letter $line="line-through">S</Letter></Format>
        <Format><Letter $line="line-through double">S</Letter></Format>
        <Format><Letter>X</Letter><sup>2</sup></Format>
        <Format><Letter>X</Letter><sub>2</sub></Format>
        <Divider />
        <Format><Letter $blue $bar>A</Letter></Format>
        <MenuArrow aria-label="Font color menu"><BlackArrow /></MenuArrow>
        <Format aria-label="Highlight"><Icon name="highlighter" /></Format>
        <MenuArrow aria-label="Highlight menu"><BlackArrow /></MenuArrow>
        <Format><Letter $blue>Aa</Letter></Format>
        <MenuArrow aria-label="Change case menu"><BlackArrow /></MenuArrow>
        <Format aria-label="Clear formatting"><Icon name="eraser" /></Format>
        <Format><Letter $size={17} $blue>A</Letter></Format>
        <Divider />
        <Format aria-label="Cut"><Icon name="cut" /></Format>
        <Format aria-label="Copy"><Icon name="copy" /></Format>
        <Format aria-label="Paste"><Icon name="paste" /></Format>
        <Format aria-label="Paste special"><Icon name="pasteSpecial" /></Format>
      </FormatButtons>
      <Overflow aria-label="More commands"><Chevron /></Overflow>
    </FormatBar>
  );
}

function LetterDialog() {
  return (
    <DialogWindow role="dialog" aria-label="Event Setup Letter Template">
      <TitleBar $active>
        <QuickBar icons={["save", "saveClose", "cancel", "refresh", "up", "down"]} />
        <WindowTitle>Event Setup Letter Template - Event Setup Letter Template</WindowTitle>
        <WindowControls />
      </TitleBar>
      <OrbButton aria-label="Application menu"><OrbLogo /></OrbButton>
      <TabRow>
        <RibbonTab $active>Home</RibbonTab>
        <CollapseButton aria-label="Collapse ribbon"><Chevron up size={8} /></CollapseButton>
      </TabRow>
      <Ribbon>
        {dialogGroups.map((g) => <RibbonGroup key={g.caption} {...g} />)}
      </Ribbon>
      <DialogBody>
        <Panel>
          <PanelTitle>Letter Template</PanelTitle>
          <Form>
            <label htmlFor="code">Letter Code:</label>
            <FieldBox><TextInput id="code" defaultValue="Booking Confirmation" /></FieldBox>
            <label htmlFor="description">Description:</label>
            <FieldBox><TextInput id="description" defaultValue="Booking Confirmation" /></FieldBox>
            <label htmlFor="reference">Communication Reference:</label>
            <FieldBox $tall>
              <TextInput id="reference" defaultValue="Confirmation" />
              <MiniButton type="button" $width={16} $height={18} aria-label="Clear">
                <svg width="8" height="8"><path d="M1 1l6 6M7 1L1 7" stroke={BLUE} strokeWidth="1.500" /></svg>
              </MiniButton>
              <MiniButton type="button" $height={18} aria-label="Open list"><Chevron size={8} /></MiniButton>
              <MiniButton type="button" $width={22} $height={18} aria-label="Look up"><Icon name="lookup" /></MiniButton>
            </FieldBox>
            <label htmlFor="finalized">Finalized:</label>
            <div><Tick type="checkbox" id="finalized" /></div>
            <label htmlFor="table">Merge Table:</label>
            <FieldBox $focus>
              <PickList id="table" $focus><option>Event</option></PickList>
              <MiniButton type="button" aria-label="Merge table list" tabIndex={-1}><Chevron size={8} /></MiniButton>
            </FieldBox>
          </Form>
        </Panel>
        <Panel $grow>
          <PanelTitle>Content</PanelTitle>
          <Editor>
            <FormatToolbar />
            <Document>
              <LetterBody contentEditable suppressContentEditableWarning spellCheck={false} role="textbox" aria-multiline aria-label="Letter">
                {letterLines.map((line, i) => {
                  const [before, after] = line.split("yyyy");
                  return (
                    <Line key={i}>
                      {before}
                      {after !== undefined && <Misspelt>yyyy</Misspelt>}
                      {after}
                    </Line>
                  );
                })}
              </LetterBody>
              <ScrollTrack>
                <ScrollArrow aria-label="Scroll up"><Chevron up size={10} /></ScrollArrow>
                <ScrollThumb>
                  <svg width="5" height="5"><path d="M0 .5h5M0 2.500h5M0 4.500h5" stroke={BLUE} /></svg>
                </ScrollThumb>
                <ScrollArrow aria-label="Scroll down"><Chevron size={10} /></ScrollArrow>
              </ScrollTrack>
            </Document>
          </Editor>
        </Panel>
      </DialogBody>
    </DialogWindow>
  );
}

export default function App() {
  return (
    <>
      <GlobalStyle />
      <Defs />
      <AppWindow>
        <TitleBar>
          <QuickBar narrow icons={["greenRefresh"]} />
          <WindowTitle>91: Financial Conference - Event - EventPro</WindowTitle>
          <WindowControls gray />
        </TitleBar>
        <OrbButton aria-label="Application menu"><OrbLogo /></OrbButton>
        <TabRow>
          <RibbonTab $active>Home</RibbonTab>
          <RibbonTab>View</RibbonTab>
          <RibbonTab>Tools</RibbonTab>
          <CollapseButton aria-label="Collapse ribbon"><Chevron up size={8} /></CollapseButton>
        </TabRow>
        <Ribbon>
          {mainGroups.map((g) => <RibbonGroup key={g.caption} {...g} />)}
        </Ribbon>
        <Workspace>
          <Navigation />
          <Documents />
        </Workspace>
        <StatusBar>
          <StatusText>
            <span>User: AliceK_001000</span>
            <span>Memory Usage: 465MB</span>
          </StatusText>
          <svg width="10" height="10" aria-hidden>
            <path d="M8 0h2v2H8zM4 4h2v2H4zM8 4h2v2H8zM0 8h2v2H0zM4 8h2v2H4zM8 8h2v2H8z" fill={BLUE} />
          </svg>
        </StatusBar>
        <LetterDialog />
      </AppWindow>
    </>
  );
}
